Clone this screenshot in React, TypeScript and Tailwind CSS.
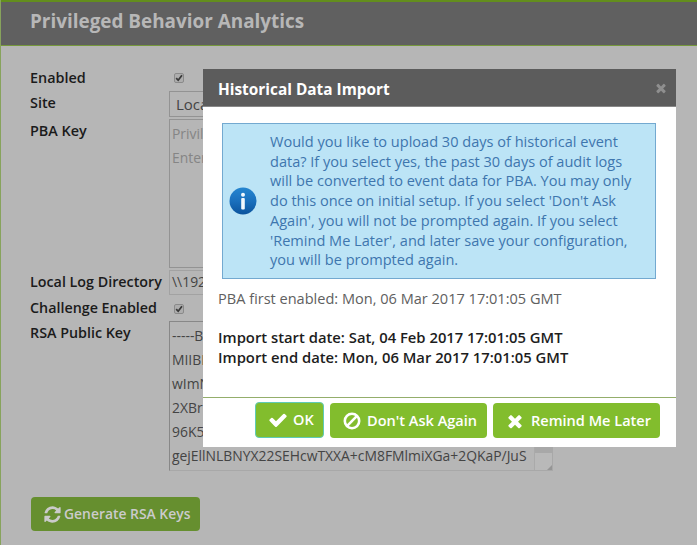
import React from "react";

type IconProps = { d: string; className: string };

const CHECK =
  "M1671 566q0 40-28 68l-724 724-136 136q-28 28-68 28t-68-28l-136-136-362-362q-28-28-28-68t28-68l136-136q28-28 68-28t68 28l294 295 656-657q28-28 68-28t68 28l136 136q28 28 28 68z";
const TIMES =
  "M1490 1322q0 40-28 68l-136 136q-28 28-68 28t-68-28l-294-294-294 294q-28 28-68 28t-68-28l-136-136q-28-28-28-68t28-68l294-294-294-294q-28-28-28-68t28-68l136-136q28-28 68-28t68 28l294 294 294-294q28-28 68-28t68 28l136 136q28 28 28 68t-28 68l-294 294 294 294q28 28 28 68z";
const REFRESH =
  "M1639 1056q0 5-1 7-64 268-268 434.5t-478 166.5q-146 0-282.5-55t-243.5-157l-129 129q-19 19-45 19t-45-19-19-45v-448q0-26 19-45t45-19h448q26 0 45 19t19 45-19 45l-137 137q71 66 161 102t187 36q134 0 250-65t186-179q11-17 53-117 8-23 30-23h192q13 0 22.5 9.5t9.5 22.5zm25-800v448q0 26-19 45t-45 19h-448q-26 0-45-19t-19-45 19-45l138-138q-148-137-349-137-134 0-250 65t-186 179q-11 17-53 117-8 23-30 23h-199q-13 0-22.5-9.5t-9.5-22.5v-7q65-268 270-434.5t480-166.5q146 0 284 55.5t245 156.5l130-129q19-19 45-19t45 19 19 45z";

function Glyph({ d, className }: IconProps) {
  return (
    <svg viewBox="0 0 1792 1792" fill="currentColor" className={className}>
      <path d={d} />
    </svg>
  );
}

function BanIcon() {
  return (
    <svg viewBox="0 0 18 18" fill="none" stroke="currentColor" strokeWidth="2.6" className="size-[18px] shrink-0">
      <circle cx="9" cy="9" r="7.2" />
      <path d="M4.2 13.8 13.8 4.2" />
    </svg>
  );
}

function InfoIcon() {
  return (
    <svg viewBox="0 0 28 28" className="size-7 shrink-0">
      <defs>
        <linearGradient id="disc" x1="0" y1="0" x2="0" y2="1">
          <stop offset="0" stopColor="#2585d0" />
          <stop offset="0.5" stopColor="#1a70bd" />
          <stop offset="1" stopColor="#0b539d" />
        </linearGradient>
      </defs>
      <circle cx="14" cy="14" r="13.5" fill="url(#disc)" />
      <circle cx="14" cy="7.8" r="2" fill="#f2f8fd" />
      <rect x="12.2" y="11" width="3.6" height="11.5" rx="1" fill="#f2f8fd" />
    </svg>
  );
}

function CheckBox() {
  return (
    <span className="ml-[5px] flex size-[10px] items-center justify-center rounded-[2px] border border-[#8a8a8a] bg-[#adadad]">
      <svg viewBox="0 0 10 10" className="size-[8px] shrink-0" fill="none" stroke="#383838" strokeWidth="2.2">
        <path d="M1.5 5.2 4 7.8 8.7 1.6" />
      </svg>
    </span>
  );
}

function Label({ children, className }: { children: React.ReactNode; className: string }) {
  return (
    <div className={`w-[139px] shrink-0 font-semibold whitespace-nowrap text-[#1b1b1b] leading-5 ${className}`}>
      <span>{children}</span>
    </div>
  );
}

export default function App() {
  return (
    <div className="relative h-[545px] w-[697px] overflow-hidden border-l border-[#87a35c] bg-[#b6b6b6] font-['Open_Sans','Noto_Sans',sans-serif] text-[14.4px] text-[#444]">
      <header className="-ml-px flex h-[46px] items-center border-t-2 border-b border-l border-t-[#638e1d] border-b-[#76983c] border-l-[#638e1d] bg-[#606060] pb-1 pl-[29px] text-[18.9px] font-bold text-[#b7b7b7]">
        <h1 className="whitespace-nowrap">Privileged Behavior Analytics</h1>
      </header>

      <main className="flex flex-col pl-[29px]">
        <div className="mt-[22px] flex h-[23px]">
          <Label className="text-[14.4px]">Enabled</Label>
          <div className="pt-[5px]"><CheckBox /></div>
        </div>
        <div className="flex h-7">
          <Label className="pt-0.5 text-[14.4px]">Site</Label>
          <div className="flex h-[26px] w-96 items-center border border-[#939393] pl-[6px] text-[15px]">Local</div>
        </div>
        <div className="flex h-[151px]">
          <Label className="pt-0.5 text-[14.4px]">PBA Key</Label>
          <div className="h-[149px] w-96 border border-[#939393] pt-[2px] pl-0.5 text-[13.9px] leading-6 whitespace-nowrap text-[#858585]">
            <p>Privileged</p>
            <p>Enter</p>
          </div>
        </div>
        <div className="flex h-[30px]">
          <Label className="pt-0.5 text-[14.3px]">Local Log Directory</Label>
          <div className="flex h-[25px] w-96 items-center border border-[#a2a2a2] pl-0.5 text-[13.9px]">\\192</div>
        </div>
        <div className="flex h-[21px]">
          <Label className="-mt-0.5 text-[14.3px]">Challenge Enabled</Label>
          <div className="pt-[4px]"><CheckBox /></div>
        </div>
        <div className="flex h-[176px]">
          <Label className="pt-0.5 text-[14.3px]">RSA Public Key</Label>
          <div className="flex h-[150px] w-[384px] justify-between border border-[#a8a8a8] border-t-[#888] border-l-[#888] pt-[2px] pl-0.5 text-[13.9px] leading-6 whitespace-nowrap">
            <div>
              <p>-----B</p>
              <p>MIIBI</p>
              <p>wImN</p>
              <p>2XBr</p>
              <p>96K5</p>
              <p>gejEllNLBNYX22SEHcwTXXA+cM8FMlmiXGa+2QKaP/JuS</p>
            </div>
            <div className="-mt-[2px] flex w-[18px] flex-col border-l border-[#aaa] bg-[#a8a8a8]">
              <div className="mt-auto flex h-[17px] items-end justify-end bg-[#b9b9b9]">
                <svg viewBox="0 0 5 5" className="size-[5px]"><path d="M5 0V5H0Z" fill="#959595" /></svg>
              </div>
            </div>
          </div>
        </div>
        <button className="ml-px flex h-[34px] w-[169px] items-center rounded-[4px] bg-[#668f2f] pl-[12px] font-semibold whitespace-nowrap text-[#cbcbcb]">
          <Glyph d={REFRESH} className="mr-[2px] size-[19px] shrink-0" />
          <span className="text-[13.9px]">Generate RSA Keys</span>
        </button>
      </main>

      <section role="dialog" className="absolute top-[69px] left-[202px] flex h-[378px] w-[473px] flex-col bg-white">
        <div className="flex h-[38px] shrink-0 items-center justify-between border-b border-[#888] bg-[#5c5c5c] pr-[8px] pl-[15px]">
          <h2 className="pt-1 text-[15.4px] font-bold whitespace-nowrap text-white">Historical Data Import</h2>
          <Glyph d={TIMES} className="size-[14px] text-[#8f8f8f]" />
        </div>
        <div className="mt-4 ml-[19px] flex h-[156px] w-[434px] shrink-0 items-center border border-[#73a9d0] bg-[#bce4f6] pl-[6px] text-[#3e76ae]">
          <InfoIcon />
          <div className="ml-[13px] text-[14.55px] leading-[19.75px] whitespace-nowrap">
            <p>Would you like to upload 30 days of historical event</p>
            <p>data? If you select yes, the past 30 days of audit logs</p>
            <p>will be converted to event data for PBA. You may only</p>
            <p>do this once on initial setup. If you select 'Don't Ask</p>
            <p>Again', you will not be prompted again. If you select</p>
            <p>'Remind Me Later', and later save your configuration,</p>
            <p>you will be prompted again.</p>
          </div>
        </div>
        <div className="mt-[9px] ml-[15px] text-[14.55px] leading-5 whitespace-nowrap">
          <p className="text-[#606060]">PBA first enabled: Mon, 06 Mar 2017 17:01:05 GMT</p>
          <p className="mt-[19px] text-[14.8px] font-semibold text-[#1d1d1d]">Import start date: Sat, 04 Feb 2017 17:01:05 GMT</p>
          <p className="text-[14.8px] font-semibold text-[#1d1d1d]">Import end date: Mon, 06 Mar 2017 17:01:05 GMT</p>
        </div>
        <footer className="mt-auto flex h-[50px] shrink-0 justify-end gap-[6px] border-t border-[#94ae6b] pt-[4px] pr-[16px] text-[14.55px] font-semibold whitespace-nowrap text-white">
          <button className="flex h-9 w-[69px] items-center rounded-[4px] border border-[#5fcbb5] bg-[#82bd2d] pl-[12px]">
            <Glyph d={CHECK} className="mr-[5px] size-[20px] shrink-0" />
            <span>OK</span>
          </button>
          <button className="mt-px flex h-[35px] w-[157px] items-center rounded-[4px] bg-[#82bd2d] pl-[13px]">
            <BanIcon />
            <span className="ml-[6px]">Don't Ask Again</span>
          </button>
          <button className="mt-px flex h-[35px] w-[167px] items-center rounded-[4px] bg-[#82bd2d] pl-[12px]">
            <Glyph d={TIMES} className="mr-[6px] size-[20px] shrink-0" />
            <span>Remind Me Later</span>
          </button>
        </footer>
      </section>
    </div>
  );
}
